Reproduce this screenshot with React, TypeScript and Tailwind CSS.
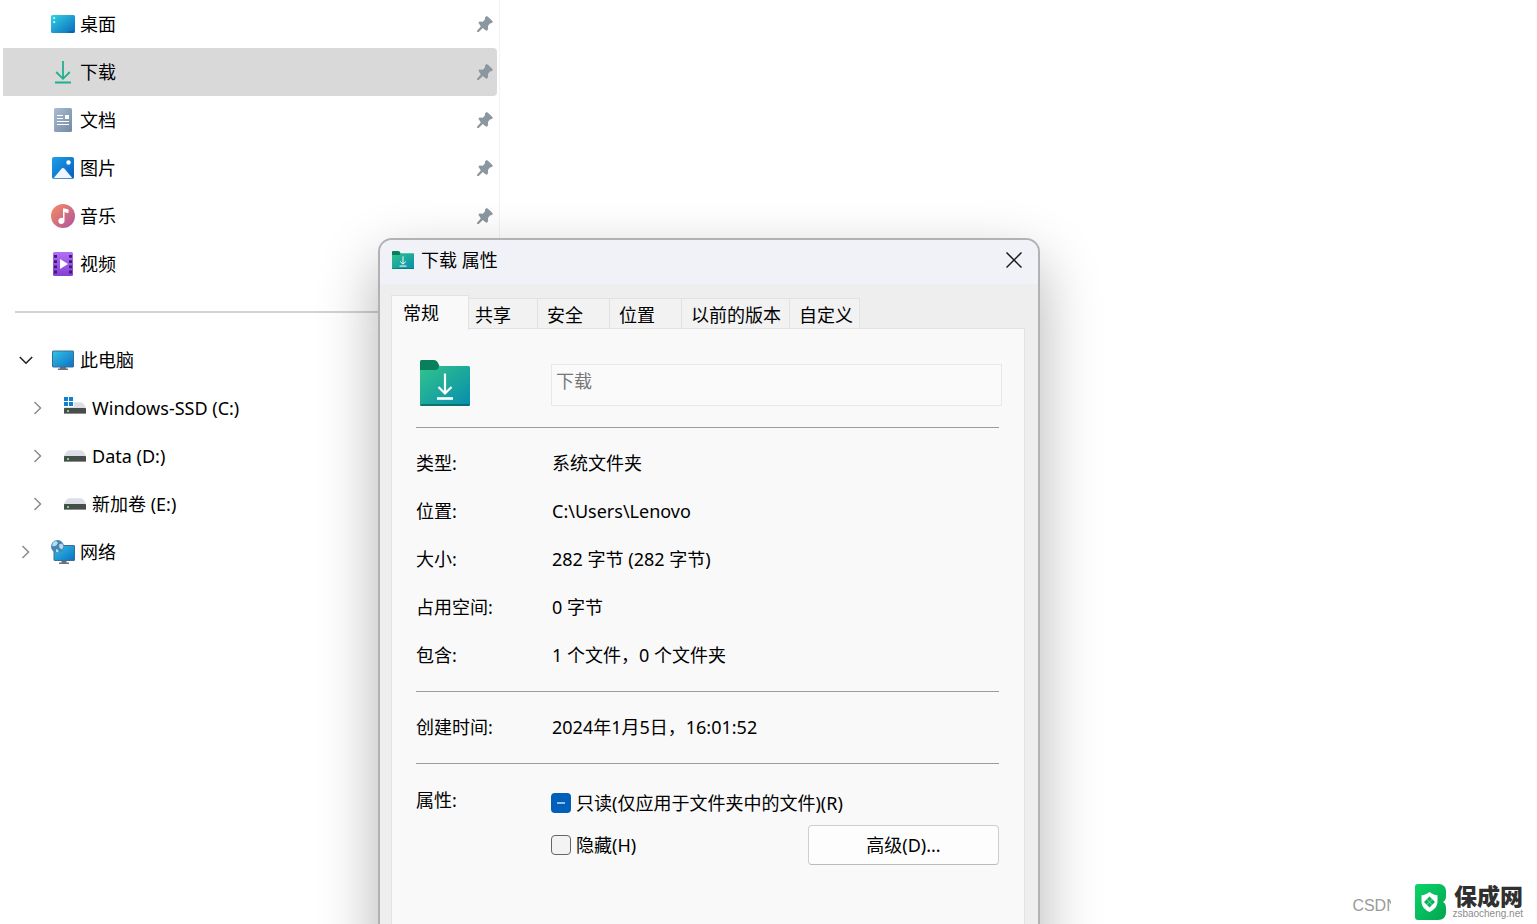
import type { ReactNode } from "react";
import clsx from "clsx";

interface TreeRowProps {
  icon: ReactNode;
  label: string;
  /** Expander state; quick-access rows have none. */
  expander?: "open" | "closed";
  /** Drives sit one level deeper than the computer itself. */
  nested?: boolean;
  pinned?: boolean;
  selected?: boolean;
}

function PinIcon() {
  return (
    <svg width="16" height="16" viewBox="0 0 16 16" fill="#8b979e" aria-hidden="true">
      <path d="M9.2.3c.8-.4 1.600.1 2.300.9L15.400 5c.6.7.4 1.600-.4 1.900l-2.100.5-1.900 2.500.1 3.200-1.300 1.800-2.600-1.700-1.400-1.100L1.700 16 .1 15.900.2 14.400l3.600-3.900L1.400 6.600l1.100-1 3.400.1L8 3.200 8.100 1.200z" />
    </svg>
  );
}

function Chevron({ open }: { open: boolean }) {
  return open ? (
    <svg width="14" height="14" viewBox="0 0 14 14" fill="none" stroke="#222" strokeWidth="1.6" aria-hidden="true">
      <path d="m.8 4 6.2 6.2L13.2 4" />
    </svg>
  ) : (
    <svg width="14" height="14" viewBox="0 0 14 14" fill="none" stroke="#8f8f8f" strokeWidth="1.6" aria-hidden="true">
      <path d="m3.500 1 6 6-6 6" />
    </svg>
  );
}

function DesktopIcon() {
  return (
    <svg width="24" height="24" viewBox="0 0 24 24" aria-hidden="true">
      <defs>
        <linearGradient id="desktop" x1="0" y1="0" x2="1" y2="1">
          <stop stopColor="#34d2e2" />
          <stop offset="1" stopColor="#0a68be" />
        </linearGradient>
      </defs>
      <rect y="3" width="24" height="18" rx="1.5" fill="url(#desktop)" />
      <path d="M2.3 5.2h1.8V7H2.3zm0 4h1.8V11H2.3z" fill="#d8fbff" />
      <path d="M18 20h1.500M20.500 20H22" stroke="#063f80" />
    </svg>
  );
}

function DownloadIcon() {
  return (
    <svg width="24" height="24" viewBox="0 0 24 24" fill="none" stroke="#20b08e" strokeWidth="1.8" aria-hidden="true">
      <path d="M12 1v17M5.200 12l6.800 6.800L18.800 12M4 22.500h16" />
    </svg>
  );
}

function DocumentIcon() {
  return (
    <svg width="24" height="24" viewBox="0 0 24 24" aria-hidden="true">
      <defs>
        <linearGradient id="doc" x1="0" y1="0" x2="1" y2="1">
          <stop stopColor="#a9bdd2" />
          <stop offset="1" stopColor="#7388a4" />
        </linearGradient>
      </defs>
      <rect x="3" width="18" height="24" rx="1.500" fill="url(#doc)" />
      <path d="M6 7.500h6M6 10.500h6M6 13.500h12M6 16.500h12" stroke="#fff" strokeWidth="1.200" />
      <path d="M14 7h4v4h-4z" fill="#fff" />
    </svg>
  );
}

function PictureIcon() {
  return (
    <svg width="24" height="24" viewBox="0 0 24 24" aria-hidden="true">
      <defs>
        <linearGradient id="pic" x1="0" y1="0" x2="1" y2="1">
          <stop stopColor="#1ba0ec" />
          <stop offset="1" stopColor="#0a5cb8" />
        </linearGradient>
      </defs>
      <rect x="1" y="1" width="22" height="22" rx="2" fill="url(#pic)" />
      <path d="m2.500 22.300 8.200-9.800c.8-.8 1.800-.8 2.600 0l8.200 9.800z" fill="#eef7ff" />
      <circle cx="17.500" cy="6.500" r="2.200" fill="#fff" />
    </svg>
  );
}

function MusicIcon() {
  return (
    <svg width="24" height="24" viewBox="0 0 24 24" aria-hidden="true">
      <defs>
        <linearGradient id="music" x1="0" y1="0" x2="1" y2="1">
          <stop offset="0.150" stopColor="#ee8466" />
          <stop offset="0.900" stopColor="#b4589c" />
        </linearGradient>
      </defs>
      <circle cx="12" cy="12" r="12" fill="url(#music)" />
      <path d="M12 4.200c2 .1 4 1.100 5.500 1.400V9c-1.600-.1-2.900-.5-4-1v9a3.100 3.100 0 1 1-1.500-2.700z" fill="#fff" />
    </svg>
  );
}

function VideoIcon() {
  return (
    <svg width="24" height="24" viewBox="0 0 24 24" aria-hidden="true">
      <defs>
        <linearGradient id="video" x1="0" y1="0" x2="0" y2="1">
          <stop stopColor="#b070f4" />
          <stop offset="1" stopColor="#8640d4" />
        </linearGradient>
      </defs>
      <rect x="2" width="20" height="24" rx="1.500" fill="url(#video)" />
      <path d="M4.500 3v19M19.500 3v19" stroke="#431a72" strokeWidth="3" strokeDasharray="2.800 2.400" />
      <path d="M9 7v10l8-5z" fill="#fff" />
    </svg>
  );
}

function ComputerIcon() {
  return (
    <svg width="24" height="24" viewBox="0 0 24 24" aria-hidden="true">
      <defs>
        <linearGradient id="pc" x1="0" y1="0" x2="1" y2="1">
          <stop stopColor="#31c4e6" />
          <stop offset="1" stopColor="#0d6fc4" />
        </linearGradient>
      </defs>
      <path d="M9 19h6v1.500H9zM7 20.500h10V22H7z" fill="#66727c" />
      <rect x="1.500" y="3" width="21" height="16" rx="0.500" fill="url(#pc)" stroke="#3a6f92" />
    </svg>
  );
}

function DriveIcon({ system = false }: { system?: boolean }) {
  return (
    <svg width="24" height="24" viewBox="0 0 24 24" aria-hidden="true">
      <path d="M6 6.300h12c2.500.8 4.200 3 5 5.700H1c.8-2.700 2.500-4.900 5-5.700z" fill="#dcdfe6" />
      <rect x="1" y="12" width="22" height="6" rx="0.500" fill="#484c4b" />
      <path d="M1 17.500h22" stroke="#8b908e" />
      <path d="M4 14h2v2H4z" fill="#5fe070" />
      {system && (
        <>
          <path d="M0 0h11v11H0z" fill="#fff" />
          <path d="M1 1h4v4H1zM6 1h4v4H6zM1 6h4v4H1zM6 6h4v4H6z" fill="#1181cf" />
        </>
      )}
    </svg>
  );
}

function NetworkIcon() {
  return (
    <svg width="24" height="24" viewBox="0 0 24 24" aria-hidden="true">
      <path d="M10.500 21h5v1.500h-5zM8 22.500h10V24H8z" fill="#66727c" />
      <rect x="3" y="5.500" width="20.500" height="15" rx="0.500" fill="url(#pc)" stroke="#3a6f92" />
      <circle cx="6.500" cy="6.500" r="6.500" fill="#4385b7" />
      <path d="M2 2.500 5 .8l2 2-1.500 2.500L3 6.500 1 5.500zM8 4.500l3-1 1.500 3L11 9.500 8.500 8zM5 9l2.500 1v2.500L5 12z" fill="#b8dbea" />
    </svg>
  );
}

/** Green system folder used both in the title bar and in the page body. */
function FolderIcon({ className }: { className: string }) {
  return (
    <svg className={className} viewBox="0 0 50 46" preserveAspectRatio="none" aria-hidden="true">
      <defs>
        <linearGradient id="folder" x1="0" y1="0" x2="1" y2="1">
          <stop stopColor="#31c48b" />
          <stop offset="1" stopColor="#078dae" />
        </linearGradient>
      </defs>
      <path d="M0 12V1.500Q0 0 1.500 0H14q2 0 3.500 2l2 4v6z" fill="#0a7f5d" />
      <path d="M0 10h16q2 0 3-3l1-1h28.500Q50 6 50 7.500v37q0 1.500-1.500 1.500h-47Q0 46 0 44.500z" fill="url(#folder)" />
      <path d="M.5 45h49" stroke="#08665f" strokeWidth="1.500" />
      <path d="M25 13.500v20M18.500 27l6.500 6.500 6.500-6.500" fill="none" stroke="#fff" strokeWidth="2.200" />
      <path d="M17 38.500h16" stroke="#fff" strokeWidth="2.600" />
    </svg>
  );
}

function TreeRow({ icon, label, expander, nested = false, pinned = false, selected = false }: TreeRowProps) {
  return (
    <li
      className={clsx(
        "flex h-12 items-center rounded-r-sm pr-1",
        nested ? "pl-7" : "pl-4",
        selected && "bg-[#d9d9d9]",
      )}
    >
      <span className="flex w-8 shrink-0">{expander && <Chevron open={expander === "open"} />}</span>
      <a href="#" className="flex items-center gap-[5px]">
        {icon}
        {label}
      </a>
      {pinned && (
        <span className="ml-auto">
          <PinIcon />
        </span>
      )}
    </li>
  );
}

function Sidebar() {
  return (
    <nav className="w-[500px] shrink-0 border-r border-[#f3f3f3] pr-[2px] pl-[3px]">
      <ul>
        <TreeRow icon={<DesktopIcon />} label="桌面" pinned />
        <TreeRow icon={<DownloadIcon />} label="下载" pinned selected />
        <TreeRow icon={<DocumentIcon />} label="文档" pinned />
        <TreeRow icon={<PictureIcon />} label="图片" pinned />
        <TreeRow icon={<MusicIcon />} label="音乐" pinned />
        <TreeRow icon={<VideoIcon />} label="视频" pinned />
      </ul>
      <div className="flex h-12 items-center px-3">
        <hr className="w-full border-t-2 border-[#d2d2d2]" />
      </div>
      <ul>
        <TreeRow icon={<ComputerIcon />} label="此电脑" expander="open" />
        <TreeRow icon={<DriveIcon system />} label="Windows-SSD (C:)" expander="closed" nested />
        <TreeRow icon={<DriveIcon />} label="Data (D:)" expander="closed" nested />
        <TreeRow icon={<DriveIcon />} label="新加卷 (E:)" expander="closed" nested />
        <TreeRow icon={<NetworkIcon />} label="网络" expander="closed" />
      </ul>
    </nav>
  );
}

const TABS = [
  { label: "共享", width: "w-[72px]" },
  { label: "安全", width: "w-[72px]" },
  { label: "位置", width: "w-[72px]" },
  { label: "以前的版本", width: "w-[108px]" },
  { label: "自定义", width: "w-[70px]" },
];

const DETAILS = [
  ["类型:", "系统文件夹"],
  ["位置:", "C:\\Users\\Lenovo"],
  ["大小:", "282 字节 (282 字节)"],
  ["占用空间:", "0 字节"],
  ["包含:", "1 个文件，0 个文件夹"],
];

function DetailRow({ label, value }: { label: string; value: string }) {
  return (
    <div className="flex h-12 items-center">
      <dt className="w-[136px] shrink-0">{label}</dt>
      <dd>{value}</dd>
    </div>
  );
}

function PropertiesDialog() {
  return (
    <section
      role="dialog"
      aria-labelledby="dialog-title"
      className="absolute top-[238px] -bottom-16 left-[378px] flex w-[662px] flex-col rounded-t-[14px] border-2 border-[#b2b2b4] bg-[#eeeeee] shadow-[0_24px_60px_rgba(0,0,0,0.3)]"
    >
      <header className="flex h-11 shrink-0 items-center rounded-t-xl bg-[#f0f2f8] pr-4 pb-1 pl-3">
        <FolderIcon className="h-[18px] w-[22px]" />
        <h1 id="dialog-title" className="ml-[7px]">
          下载 属性
        </h1>
        <button type="button" aria-label="关闭" className="ml-auto">
          <svg width="16" height="16" viewBox="0 0 16 16" stroke="#1a1a1a" strokeWidth="1.5" aria-hidden="true">
            <path d="m.5.5 15 15M15.500.5l-15 15" />
          </svg>
        </button>
      </header>

      <div className="flex flex-1 flex-col pt-[11px] pr-[13px] pl-[11px]">
        <div role="tablist" className="flex items-end">
          <button
            type="button"
            role="tab"
            aria-selected="true"
            className="z-10 -mb-px h-[35px] w-[78px] border border-b-0 border-[#e2e2e2] bg-[#f9f9f9] pl-[11px] text-left"
          >
            常规
          </button>
          {TABS.map((tab, i) => (
            <button
              key={tab.label}
              type="button"
              role="tab"
              aria-selected="false"
              className={clsx(
                "h-[31px] border-t border-r border-[#e2e2e2] bg-[#f2f2f2] pt-0.5 pl-[9px] text-left whitespace-nowrap",
                tab.width,
                i === 0 && "-ml-[3px]",
              )}
            >
              {tab.label}
            </button>
          ))}
        </div>

        <div role="tabpanel" className="-mt-px flex-1 border border-[#e2e2e2] bg-[#f9f9f9] pr-[25px] pl-6">
          <div className="-mr-[3px] flex items-end pt-[31px] pb-[21px]">
            <FolderIcon className="ml-1 h-[46px] w-[50px]" />
            <input
              aria-label="文件夹名称"
              defaultValue="下载"
              disabled
              className="ml-[81px] h-[42px] min-w-0 flex-1 border border-[#e8e8e8] bg-[#fafafa] pb-2.5 pl-1 text-[#777]"
            />
          </div>

          <dl className="border-y border-[#9b9b9b] pt-[11px] pb-3">
            {DETAILS.map(([label, value]) => (
              <DetailRow key={label} label={label} value={value} />
            ))}
          </dl>
          <dl className="border-b border-[#9b9b9b] pt-[11px] pb-3">
            <DetailRow label="创建时间:" value="2024年1月5日，16:01:52" />
          </dl>

          <fieldset className="flex pt-[18px]">
            <legend className="float-left h-9 w-[135px] leading-9">属性:</legend>
            <div className="flex-1">
              <label className="flex h-[42px] items-center gap-[5px]">
                <input
                  type="checkbox"
                  ref={(el) => {
                    if (el) el.indeterminate = true;
                  }}
                  className="size-5 appearance-none rounded-sm bg-[#005fb8] bg-[linear-gradient(#8fc0ee,#8fc0ee)] bg-[length:8px_2px] bg-center bg-no-repeat"
                />
                只读(仅应用于文件夹中的文件)(R)
              </label>
              <div className="flex h-[42px] items-center justify-between">
                <label className="flex items-center gap-[5px]">
                  <input
                    type="checkbox"
                    className="size-5 appearance-none rounded-sm border border-[#666] bg-[#f3f3f3]"
                  />
                  隐藏(H)
                </label>
                <button
                  type="button"
                  className="h-10 w-[191px] rounded-sm border border-[#cfcfcf] border-b-[#bbb] bg-[#fdfdfd]"
                >
                  高级(D)...
                </button>
              </div>
            </div>
          </fieldset>
        </div>
      </div>
    </section>
  );
}

function Watermark() {
  return (
    <footer className="absolute right-[14px] bottom-1 flex items-center">
      <span className="mr-6 w-[39px] overflow-hidden pt-2 font-['Liberation_Sans'] text-base text-[#9a9a9a]">CSDN</span>
      <svg width="32" height="36" viewBox="0 0 32 36" aria-hidden="true">
        <defs>
          <linearGradient id="brand" x1="0" y1="0" x2="1" y2="1">
            <stop stopColor="#0bd468" />
            <stop offset="1" stopColor="#02a551" />
          </linearGradient>
        </defs>
        <path
          d="M3 0h21c4 0 7 3 7 7v5c0 3-1 5-3 6 2 1 3 3 3 6v4c0 5-3 8-8 8H3c-2 0-3-1-3-3V3c0-2 1-3 3-3z"
          fill="url(#brand)"
        />
        <path d="M14.500 8c2.500 2 5 3 8 3.200v6.300c0 5-3.500 8.500-8 10.500-4.500-2-8-5.500-8-10.500v-6.300c3-.2 5.500-1.200 8-3.200z" fill="#fff" />
        <path d="m14.500 12.500 5.500 5.500-5.500 5.500L9 18z" fill="#07b25a" />
        <path d="m11.500 15 6 6M17.500 15l-6 6" stroke="#8fe5b5" strokeWidth="0.800" />
      </svg>
      <div className="ml-[5px] flex flex-col items-end pt-px">
        <span className="text-[23px] leading-6 font-black text-[#303030]">保成网</span>
        <a href="#" className="font-['Liberation_Sans'] text-[10px] leading-3 text-[#8d8d8d]">
          zsbaocheng.net
        </a>
      </div>
    </footer>
  );
}

export default function App() {
  return (
    <main className="relative flex h-screen overflow-hidden bg-white font-['Noto_Sans','Noto_Sans_CJK_SC',sans-serif] text-lg leading-6 text-black">
      <Sidebar />
      <PropertiesDialog />
      <Watermark />
    </main>
  );
}
